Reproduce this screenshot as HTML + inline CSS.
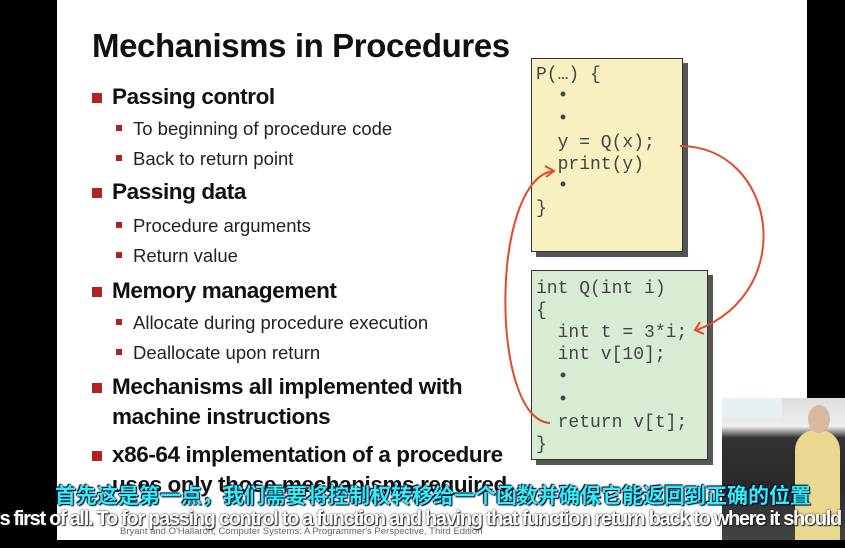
<!DOCTYPE html>
<html><head><meta charset="utf-8"><style>
body{margin:0;width:845px;height:548px;background:#000;position:relative;overflow:hidden;font-family:"Liberation Sans",sans-serif}
.slide{position:absolute;left:57px;top:0;width:750px;height:540px;background:#fff}
.t{position:absolute;white-space:nowrap;color:#111}
.h{left:92px;top:27px;font-size:33px;font-weight:bold;letter-spacing:-0.4px}
.l1{font-size:22.5px;font-weight:bold;left:112px;letter-spacing:-0.4px}
.l2{font-size:18.5px;left:133px;color:#222;letter-spacing:0}
.b1{position:absolute;left:92px;width:10px;height:10px;background:#b22222}
.b2{position:absolute;left:116px;width:6px;height:6px;background:#b22222}
.box{position:absolute;border:1px solid #333;box-shadow:5px 5px 0 #555;font-family:"Liberation Mono",monospace;font-size:18px;color:#444}
.box div{position:absolute;white-space:pre;left:4px}
.zh{position:absolute;left:0;width:866px;text-align:center;top:480px;font-family:"Liberation Sans","Noto Sans CJK SC",sans-serif;font-weight:bold;font-size:21px;color:#2ef0f0;text-shadow:0 0 2px #003,1px 1px 1px #003,-1px -1px 1px #003}
.en{position:absolute;left:-4px;top:508px;white-space:nowrap;font-weight:bold;font-size:20px;color:#fff;letter-spacing:-1.3px;text-shadow:0 0 2px #222,1px 1px 1px #222}
</style></head><body>
<div class="slide"></div>
<div class="t h">Mechanisms in Procedures</div>
<div class="b1" style="top:93px"></div><div class="t l1" style="top:84px">Passing control</div>
<div class="b2" style="top:125px"></div><div class="t l2" style="top:118px">To beginning of procedure code</div>
<div class="b2" style="top:155px"></div><div class="t l2" style="top:148px">Back to return point</div>
<div class="b1" style="top:188px"></div><div class="t l1" style="top:179px">Passing data</div>
<div class="b2" style="top:222px"></div><div class="t l2" style="top:215px">Procedure arguments</div>
<div class="b2" style="top:252px"></div><div class="t l2" style="top:245px">Return value</div>
<div class="b1" style="top:287px"></div><div class="t l1" style="top:278px">Memory management</div>
<div class="b2" style="top:319px"></div><div class="t l2" style="top:312px">Allocate during procedure execution</div>
<div class="b2" style="top:349px"></div><div class="t l2" style="top:342px">Deallocate upon return</div>
<div class="b1" style="top:383px"></div><div class="t l1" style="top:374px">Mechanisms all implemented with</div>
<div class="t l1" style="top:404px">machine instructions</div>
<div class="b1" style="top:451px"></div><div class="t l1" style="top:442px">x86-64 implementation of a procedure</div>
<div class="t l1" style="top:472px">uses only those mechanisms required</div>
<div class="box" style="left:531px;top:58px;width:150px;height:192px;background:#f7f0c0">
<div style="top:6px">P(…) {</div><div style="top:27px">  •</div><div style="top:50px">  •</div><div style="top:74px">  y = Q(x);</div><div style="top:96px">  print(y)</div><div style="top:117px">  •</div><div style="top:140px">}</div></div>
<div class="box" style="left:531px;top:270px;width:175px;height:188px;background:#d8ecd4">
<div style="top:8px">int Q(int i)</div><div style="top:30px">{</div><div style="top:52px">  int t = 3*i;</div><div style="top:74px">  int v[10];</div><div style="top:96px">  •</div><div style="top:119px">  •</div><div style="top:142px">  return v[t];</div><div style="top:164px">}</div></div>
<svg style="position:absolute;left:0;top:0" width="845" height="548">
<path d="M680 146 C775 146 800 290 697 330" fill="none" stroke="#e04a2a" stroke-width="2"/>
<path d="M700 322 L695 330 L704 334" fill="none" stroke="#e04a2a" stroke-width="2"/>
<path d="M550 423 C490 420 490 180 553 171" fill="none" stroke="#e04a2a" stroke-width="2"/>
<path d="M545 166 L554 171 L546 177" fill="none" stroke="#e04a2a" stroke-width="2"/>
</svg>
<div style="position:absolute;left:722px;top:398px;width:123px;height:142px;background:linear-gradient(#ddd 0,#eee 20%,#333 28%,#2a2a2a 60%,#444 100%)"></div>
<div style="position:absolute;left:722px;top:398px;width:60px;height:20px;background:#e8f0f4"></div>
<div style="position:absolute;left:795px;top:430px;width:45px;height:110px;background:#e8d890;border-radius:20px 20px 0 0"></div>
<div style="position:absolute;left:808px;top:405px;width:22px;height:28px;background:#d8b8a0;border-radius:50%"></div>
<div class="t" style="left:120px;top:526px;font-size:9.5px;color:#666">Bryant and O'Hallaron, Computer Systems: A Programmer's Perspective, Third Edition</div>
<div class="zh">首先这是第一点，我们需要将控制权转移给一个函数并确保它能返回到正确的位置</div>
<div class="en">'s first of all. To for passing control to a function and having that function return back to where it should g</div>
</body></html>
